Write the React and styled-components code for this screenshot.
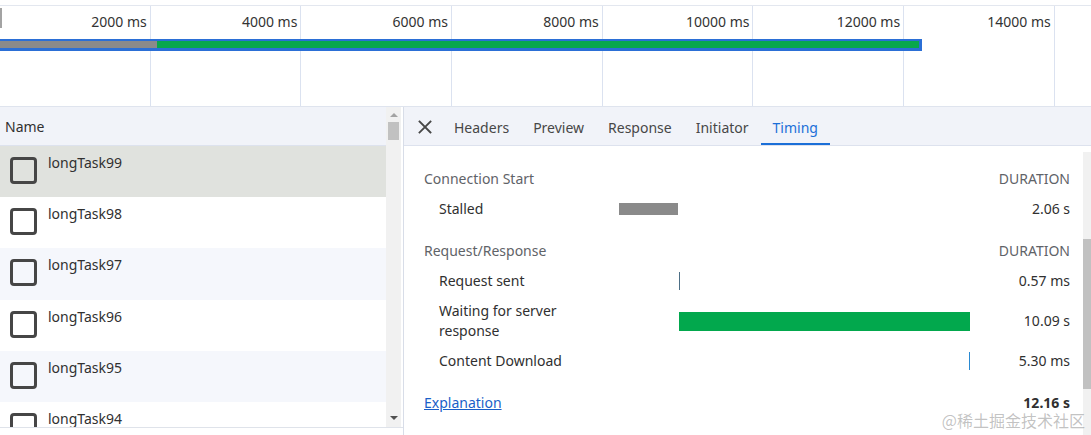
import React from 'react';
import styled, { createGlobalStyle } from 'styled-components';

const GlobalStyle = createGlobalStyle`
  html, body {
    margin: 0;
    padding: 0;
    background: #ffffff;
  }
  body {
    font-family: 'Noto Sans', 'Open Sans', Arial, sans-serif;
    font-size: 14px;
    color: #303030;
  }
`;

const TICK = 150.7;
const ticks = ['2000 ms', '4000 ms', '6000 ms', '8000 ms', '10000 ms', '12000 ms', '14000 ms', ''];

const tasks = [99, 98, 97, 96, 95, 94];

const tabs = ['Headers', 'Preview', 'Response', 'Initiator', 'Timing'];

const TOTAL = 12.16;

const sections = [
  {
    title: 'Connection Start',
    rows: [{ label: 'Stalled', start: 0, dur: 2.06, text: '2.06 s', color: '#8a8a8a', h: 12 }],
  },
  {
    title: 'Request/Response',
    rows: [
      { label: 'Request sent', start: 2.08, dur: 0, text: '0.57 ms', color: '#4d6f86', h: 18 },
      { label: 'Waiting for server response', start: 2.08, dur: 10.08, text: '10.09 s', color: '#02a84d', h: 19 },
      { label: 'Content Download', start: 12.16, dur: 0, text: '5.30 ms', color: '#2a8ad2', h: 18 },
    ],
  },
];

const Page = styled.div`
  position: relative;
  width: 1091px;
  height: 435px;
  overflow: hidden;
  display: flex;
  flex-direction: column;
`;

const Overview = styled.div`
  position: relative;
  height: 100px;
  margin-top: 5px;
  border-top: 1px solid #e3e7ef;
  border-bottom: 1px solid #dfe4ee;
  display: flex;
`;

const TickCell = styled.div`
  flex: 0 0 ${TICK}px;
  box-sizing: border-box;
  border-right: 1px solid #dbe2f0;
  padding: 6px 3px 0 0;
  text-align: right;
  line-height: 20px;
  font-size: 14px;
  color: #333;
  white-space: nowrap;
`;

const EdgeMark = styled.div`
  position: absolute;
  left: 0;
  top: 2px;
  width: 2px;
  height: 20px;
  background: #a3a3a3;
`;

const OverviewBar = styled.div`
  position: absolute;
  left: 0;
  top: 33px;
  width: 922px;
  box-sizing: border-box;
  padding: 2px 3px 3px 0;
  background: #2b6fd6;
  display: flex;
`;

const Segment = styled.div`
  height: 7px;
  background: ${(p) => p.$color};
  flex: ${(p) => (p.$grow ? '1' : `0 0 ${p.$w}px`)};
`;

const Main = styled.div`
  flex: 1;
  display: flex;
  min-height: 0;
`;

const LeftPanel = styled.div`
  flex: 0 0 403px;
  border-right: 1px solid #d8dde8;
  display: flex;
  flex-direction: column;
`;

const LeftBody = styled.div`
  height: 320px;
  display: flex;
  border-bottom: 1px solid #dfe3ea;
`;

const NameColumn = styled.div`
  flex: 0 0 386px;
  display: flex;
  flex-direction: column;
  overflow: hidden;
`;

const HeaderBar = styled.div`
  height: 38px;
  flex: 0 0 38px;
  background: #f1f3f9;
  border-bottom: 1px solid #dde2ee;
  display: flex;
  align-items: center;
`;

const NameHeader = styled(HeaderBar)`
  padding-left: 5px;
  font-size: 14px;
  color: #303030;
`;

const TaskRow = styled.div`
  flex: 0 0 51.2px;
  box-sizing: border-box;
  display: flex;
  align-items: flex-start;
  padding: 8px 0 0 10px;
  background: ${(p) => (p.$selected ? '#e0e2de' : p.$alt ? '#f5f7fc' : '#ffffff')};
`;

const FileIcon = styled.span`
  flex: 0 0 auto;
  width: 27px;
  height: 27px;
  box-sizing: border-box;
  border: 3px solid #464646;
  border-radius: 4px;
  margin: 3px 11px 0 0;
`;

const TaskName = styled.span`
  line-height: 18px;
  font-size: 14px;
  color: #303030;
`;

const Scrollbar = styled.div`
  flex: 0 0 ${(p) => p.$w || 15}px;
  background: #f1f1f1;
  display: flex;
  flex-direction: column;
  align-items: center;
  margin-top: ${(p) => p.$top || 0}px;
`;

const Arrow = styled.div`
  width: 0;
  height: 0;
  border-left: 4px solid transparent;
  border-right: 4px solid transparent;
  ${(p) =>
    p.$down
      ? `border-top: 4px solid #505050; margin-top: auto; margin-bottom: 7px;`
      : `border-bottom: 4px solid #a3a3a3; margin-top: 6px;`}
`;

const Thumb = styled.div`
  width: ${(p) => p.$w || 11}px;
  height: ${(p) => p.$h}px;
  margin-top: ${(p) => p.$top}px;
  background: #c1c1c1;
  align-self: ${(p) => (p.$start ? 'flex-start' : 'center')};
`;

const RightPanel = styled.div`
  flex: 1;
  display: flex;
  flex-direction: column;
  min-width: 0;
`;

const TabBar = styled(HeaderBar)`
  padding-left: 14px;
`;

const CloseButton = styled.span`
  width: 14px;
  height: 14px;
  display: flex;
  margin: 2px 10px 0 0;
`;

const Tab = styled.div`
  height: 100%;
  box-sizing: border-box;
  padding: 4px 12px 0;
  display: flex;
  align-items: center;
  font-size: 14px;
  color: ${(p) => (p.$active ? '#1b6fd8' : '#474747')};
  border-bottom: 2px solid ${(p) => (p.$active ? '#1b6fd8' : 'transparent')};
`;

const RightBody = styled.div`
  flex: 1;
  display: flex;
  min-height: 0;
`;

const Timing = styled.div`
  flex: 1;
  padding: 18px 13px 0 20px;
`;

const Section = styled.div`
  & + & {
    margin-top: 12px;
  }
`;

const TimingRow = styled.div`
  display: grid;
  grid-template-columns: 195px 351px 1fr;
  align-items: center;
  min-height: 30px;
  box-sizing: border-box;
  padding: 5px 0;
  line-height: 20px;
`;

const SectionTitle = styled.div`
  color: #5f6368;
  font-size: 14px;
`;

const DurationHead = styled.div`
  grid-column: 3;
  text-align: right;
  color: #5f6368;
  font-size: 14px;
`;

const RowLabel = styled.div`
  padding-left: 15px;
  padding-right: 40px;
  color: #303030;
  font-size: 14px;
`;

const BarCell = styled.div`
  display: flex;
  align-items: center;
`;

const Bar = styled.div`
  background: ${(p) => p.$color};
  height: ${(p) => p.$h}px;
  min-width: 1px;
`;

const Duration = styled.div`
  grid-column: 3;
  text-align: right;
  color: #303030;
  font-size: 14px;
  font-weight: ${(p) => (p.$bold ? 700 : 400)};
`;

const FooterRow = styled(TimingRow)`
  margin-top: 12px;
`;

const Explanation = styled.a`
  color: #1a5fc8;
  text-decoration: underline;
  font-size: 14px;
`;

const Watermark = styled.div`
  position: absolute;
  right: 6px;
  bottom: 3px;
  font-family: 'Noto Sans CJK SC', sans-serif;
  font-size: 16px;
  color: rgba(120, 120, 120, 0.45);
`;

const CloseIcon = () => (
  <svg width="14" height="14" viewBox="0 0 14 14">
    <path d="M1.5 1.5 L12.5 12.5 M12.5 1.5 L1.5 12.5" stroke="#474747" strokeWidth="1.8" strokeLinecap="square" />
  </svg>
);

const px = (v) => (v / TOTAL) * 351;

const App = () => (
  <Page>
    <GlobalStyle />
    <Overview>
      {ticks.map((t, i) => (
        <TickCell key={i}>{t}</TickCell>
      ))}
      <EdgeMark />
      <OverviewBar>
        <Segment $color="#8a8a8a" $w={157} />
        <Segment $color="#08a74c" $grow />
      </OverviewBar>
    </Overview>
    <Main>
      <LeftPanel>
        <LeftBody>
          <NameColumn>
            <NameHeader>Name</NameHeader>
            {tasks.map((n, i) => (
              <TaskRow key={n} $selected={i === 0} $alt={i % 2 === 0}>
                <FileIcon />
                <TaskName>longTask{n}</TaskName>
              </TaskRow>
            ))}
          </NameColumn>
          <Scrollbar>
            <Arrow />
            <Thumb $h={18} $top={5} />
            <Arrow $down />
          </Scrollbar>
        </LeftBody>
      </LeftPanel>
      <RightPanel>
        <TabBar>
          <CloseButton>
            <CloseIcon />
          </CloseButton>
          {tabs.map((t) => (
            <Tab key={t} $active={t === 'Timing'}>
              {t}
            </Tab>
          ))}
        </TabBar>
        <RightBody>
          <Timing>
            {sections.map((s) => (
              <Section key={s.title}>
                <TimingRow>
                  <SectionTitle>{s.title}</SectionTitle>
                  <DurationHead>DURATION</DurationHead>
                </TimingRow>
                {s.rows.map((r) => (
                  <TimingRow key={r.label}>
                    <RowLabel>{r.label}</RowLabel>
                    <BarCell>
                      <Bar
                        $color={r.color}
                        $h={r.h}
                        style={{ marginLeft: Math.min(px(r.start), 350), width: px(r.dur) }}
                      />
                    </BarCell>
                    <Duration>{r.text}</Duration>
                  </TimingRow>
                ))}
              </Section>
            ))}
            <FooterRow>
              <Explanation href="#">Explanation</Explanation>
              <Duration $bold>12.16 s</Duration>
            </FooterRow>
          </Timing>
          <Scrollbar $w={8} $top={6}>
            <Thumb $w={8} $h={150} $top={87} $start />
          </Scrollbar>
        </RightBody>
      </RightPanel>
    </Main>
    <Watermark>@稀土掘金技术社区</Watermark>
  </Page>
);

export default App;
